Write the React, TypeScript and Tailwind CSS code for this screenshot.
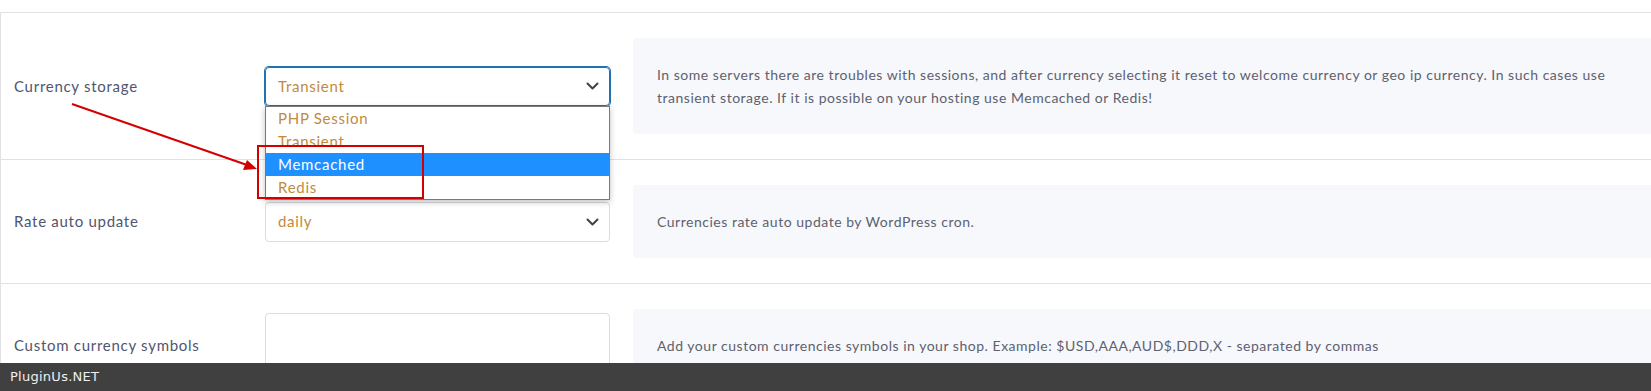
import React from 'react';

const gold = 'text-[#c08b3c]';

const Chevron = () => (
  <svg width="13" height="8" viewBox="0 0 13 8" fill="none" className="shrink-0">
    <polyline points="1.5,1.5 6.5,6.5 11.5,1.5" stroke="#3c434a" strokeWidth="2" strokeLinecap="round" strokeLinejoin="round" />
  </svg>
);

const options = ['PHP Session', 'Transient', 'Memcached', 'Redis'];

const Row = ({ label, control, children }: { label: string; control: React.ReactNode; children: React.ReactNode }) => (
  <div className="flex items-center border-b border-l border-[#e1e2e6] py-[25px]">
    <div className="w-[264px] shrink-0 pl-[13px] text-[15px] text-[#4f5670]">{label}</div>
    <div className="w-[345px] shrink-0">{control}</div>
    <div className="ml-[23px] w-[1040px] shrink-0 rounded-[4px] bg-[#f7f8fb] px-[24px] py-[25px] text-[14px] leading-[23px] tracking-[0.037em] text-[#5d616f]">
      {children}
    </div>
  </div>
);

export default function App() {
  return (
    <div className="relative flex h-[391px] w-[1651px] flex-col overflow-hidden bg-white font-['Lato',sans-serif] tracking-[0.045em]">
      <div className="h-[363px] overflow-hidden">
        <div className="h-[13px] border-b border-[#e1e2e6]" />

        <Row
          label="Currency storage"
          control={
            <div className="relative">
              <div className="flex h-[39px] items-center justify-between rounded-[4px] border border-[#2271b1] pl-[12px] pr-[10px] text-[15px] shadow-[0_0_0_1px_#2271b1]">
                <span className={gold}>Transient</span>
                <Chevron />
              </div>
              <ul className="absolute left-0 top-full z-10 w-full border border-[#7a7a7a] bg-white text-[15px] shadow-[0_2px_6px_rgba(0,0,0,0.25)]">
                {options.map(o => (
                  <li
                    key={o}
                    className={
                      o === 'Memcached'
                        ? 'h-[23px] bg-[#1e90ff] pl-[12px] leading-[23px] text-white'
                        : `h-[23px] pl-[12px] leading-[23px] ${gold}`
                    }
                  >
                    {o}
                  </li>
                ))}
              </ul>
            </div>
          }
        >
          In some servers there are troubles with sessions, and after currency selecting it reset to welcome currency or geo ip currency. In such cases use
          <br />
          transient storage. If it is possible on your hosting use Memcached or Redis!
        </Row>

        <Row
          label="Rate auto update"
          control={
            <div className="flex h-[40px] items-center justify-between rounded-[4px] border border-[#dcdde2] pl-[12px] pr-[10px] text-[15px]">
              <span className={gold}>daily</span>
              <Chevron />
            </div>
          }
        >
          Currencies rate auto update by WordPress cron.
        </Row>

        <Row
          label="Custom currency symbols"
          control={<div className="h-[65px] rounded-[4px] border border-[#dcdde2] bg-white" />}
        >
          Add your custom currencies symbols in your shop. Example: $USD,AAA,AUD$,DDD,X - separated by commas
        </Row>
      </div>

      <div className="flex h-[28px] items-center bg-[#404040] pl-[10px] font-['DejaVu_Sans',sans-serif] text-[13px] tracking-[0.02em] text-[#f0f0f0]">
        PluginUs.NET
      </div>

      {/* annotation: red box around Memcached / Redis */}
      <div className="pointer-events-none absolute left-[257px] top-[145px] z-20 h-[54px] w-[167px] border-2 border-[#d40000]" />

      {/* annotation: arrow */}
      <svg className="pointer-events-none absolute left-0 top-0 z-20" width="300" height="200" viewBox="0 0 300 200">
        <line x1="72" y1="104" x2="247" y2="165" stroke="#d40000" strokeWidth="2" />
        <polygon points="257,169 243,170 247,160" fill="#d40000" />
      </svg>
    </div>
  );
}
